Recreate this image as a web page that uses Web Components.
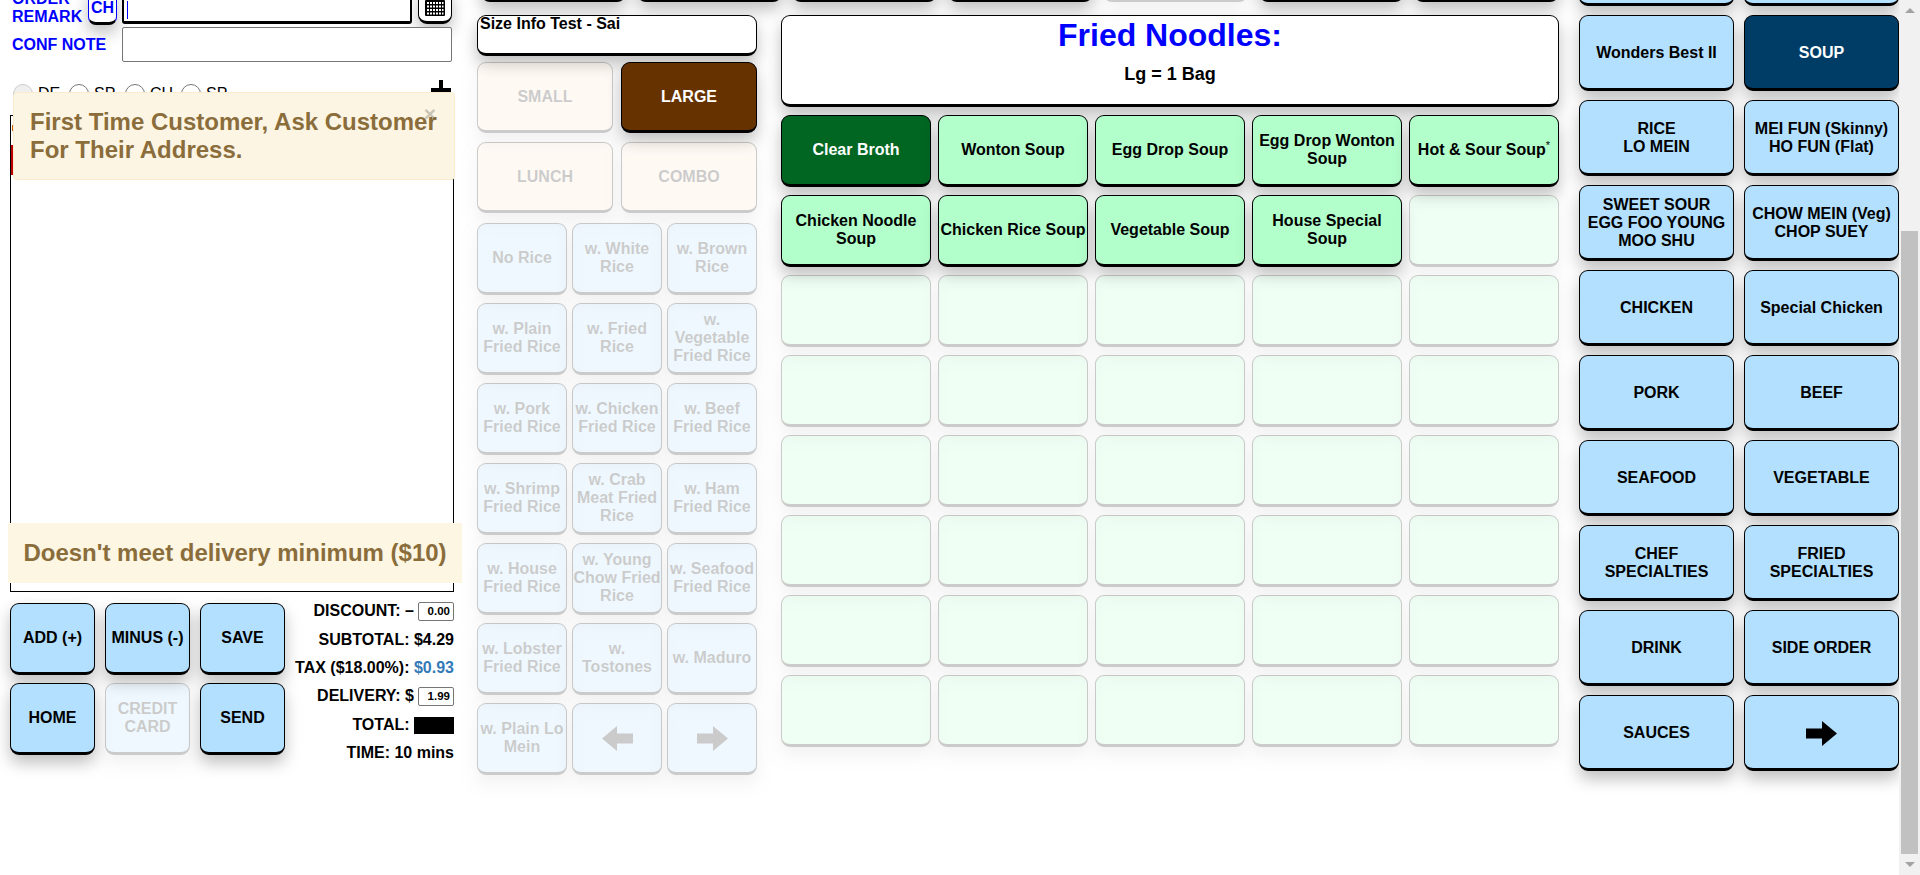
<!DOCTYPE html>
<html>
<head>
<meta charset="utf-8">
<title>POS</title>
<style>
  html, body { margin: 0; height: 100%; background: #fff; overflow: hidden; }
  body { font-family: "Liberation Sans", Arial, sans-serif; }
</style>
</head>
<body>
<pos-app></pos-app>
<script>
const ARROW_RIGHT = `<svg style="display:block;margin:auto" width="31" height="25" viewBox="0 0 31 25"><path d="M0 7.5h16V0l15 12.5L16 25v-7.5H0z" fill="currentColor"/></svg>`;
const ARROW_LEFT = `<svg style="display:block;margin:auto" width="31" height="25" viewBox="0 0 31 25"><path d="M31 7.5H15V0L0 12.5 15 25v-7.5h16z" fill="currentColor"/></svg>`;

// One menu button. Colour comes from the "tone" attribute, "off" greys it out
class PosButton extends HTMLElement {
    constructor() {
        super();
        this.attachShadow({ mode: "open" });
        this.shadowRoot.innerHTML = `
        <style>
          :host {
            display: block;
            box-sizing: border-box;
            --bg: #b3e0ff;
            --fg: #000;
            background: var(--bg);
            color: var(--fg);
            border: 1px solid #000;
            border-bottom-width: 3px;
            border-radius: 9px;
            box-shadow: 0 8px 16px rgba(0,0,0,.25);
            font: bold 16px/18px "Liberation Sans", Arial, sans-serif;
            text-align: center;
          }
          :host([tone="green"]) { --bg: #b3ffcc; }
          :host([tone="brown"]) { --bg: #663300; --fg: #fff; }
          :host([tone="dgreen"]) { --bg: #006622; --fg: #fff; }
          :host([tone="navy"]) { --bg: #003d66; --fg: #fff; }
          :host([tone="tan"]) { --bg: #ffe6cc; }
          :host([off]) { opacity: .2; }
          .in {
            box-sizing: border-box;
            height: 100%;
            padding-top: var(--nudge, 0px);
            display: flex;
            align-items: center;
            justify-content: center;
          }
        </style>
        <div class="in"><div><slot></slot></div></div>`;
    }
}

class PosOrder extends HTMLElement {
    constructor() {
        super();
        this.attachShadow({ mode: "open" });
        this.shadowRoot.innerHTML = `
        <style>
          :host { display: block; position: relative; width: 445px; padding-top: 56px; }
          .remark { display: flex; align-items: flex-end; height: 38px; }
          .lbl { color: #00f; font: bold 16px/18px "Liberation Sans", Arial, sans-serif; padding-left: 2px; }
          .remark .lbl { width: 76px; margin-bottom: -2px; }
          .ch {
            box-sizing: border-box; width: 29px; height: 39px; margin-bottom: -1px;
            border: 1px solid #00f; border-bottom: 3px solid #000; border-top-width: 0;
            border-radius: 8px; background: #fff; color: #00f;
            font: bold 16px/44px "Liberation Sans", Arial, sans-serif; text-align: center;
            box-shadow: 0 8px 16px rgba(0,0,0,.25);
          }
          .remark input {
            box-sizing: border-box; width: 290px; height: 38px; margin-left: 5px;
            border: 2px solid #000; border-bottom-width: 3px; border-radius: 3px; background: #fff; outline: 0; padding: 0;
            position: relative;
          }
          .caret { width: 1px; height: 18px; background: #00f; margin: 0 0 5px -285px; flex: none; position: relative; }
          .cal {
            box-sizing: border-box; width: 34px; height: 38px; margin-left: 290px;
            border: 1px solid #000; border-bottom: 3px solid #000; border-radius: 9px; background: #fff;
            display: flex; align-items: flex-end; justify-content: center; padding-bottom: 5px;
            box-shadow: 0 8px 16px rgba(0,0,0,.25);
          }
          .conf { display: flex; align-items: center; height: 36px; margin-top: 2px; }
          .conf .lbl { width: 110px; padding-top: 1px; }
          .conf input {
            box-sizing: border-box; width: 330px; height: 35px; border: 1px solid #767676;
            border-radius: 2px; background: #fff; padding: 0; margin: 0;
          }
          .radios { display: flex; align-items: center; height: 30px; margin-top: 17px; padding-left: 3px; position: relative; font: 16px "Liberation Sans", Arial, sans-serif; }
          .radios i { box-sizing: border-box; width: 20px; height: 20px; border: 1px solid #767676; border-radius: 50%; margin-right: 5px; }
          .radios i.off { border-color: #ccc; background: #efefef; }
          .radios span { width: 31px; }
          .plus { margin-left: auto; margin-right: 3px; margin-top: -8px; }
          .box {
            box-sizing: border-box; height: 477px; margin-top: 6px; border: 1px solid #000;
            padding-top: 9px; background: #fff;
          }
          .box b { display: block; margin-left: 1px; width: 2px; height: 6px; background: #c06000; }
          .box u { display: block; margin: 14px 0 0 0; width: 3px; height: 30px; background: #c00000; }
          .bottom { display: grid; grid-template-columns: 275px 1fr; margin-top: 11px; }
          .keys { display: grid; grid-template-columns: repeat(3, 85px); grid-auto-rows: 72px; gap: 8px 10px; }
          .sum { font: bold 16px/18px "Liberation Sans", Arial, sans-serif; text-align: right; display: grid; grid-auto-rows: 28.4px; align-items: center; margin-top: -6px; margin-left: -20px; white-space: nowrap; }
          .sum .n {
            display: inline-block; box-sizing: border-box; width: 36px; height: 19px; border: 1px solid #767676; border-radius: 2px;
            font: bold 11.5px/17px "Liberation Sans", Arial, sans-serif; text-align: right; padding-right: 3px; margin-left: 4px; vertical-align: middle;
          }
          .sum em { color: #337ab7; font-style: normal; }
          .sum .blk { display: inline-block; width: 40px; height: 17px; background: #000; vertical-align: middle; }
          .alert { position: absolute; box-sizing: border-box; font-weight: bold; color: #8a6d3b; background: #fcf5e3; }
          .a1 {
            left: 3px; right: -1px; top: 162px; height: 88px; border: 1px solid #faebcc; border-radius: 4px;
            padding: 15px 16px; font-size: 24px; line-height: 28px;
          }
          .a1 .x { position: absolute; top: 10px; right: 18px; font-size: 21px; line-height: 21px; color: #000; opacity: .2; }
          .a2 {
            left: -2px; right: -8px; top: 593px; height: 60px; background: #fcf6e3;
            font-size: 24px; line-height: 60px; text-align: center;
          }
        </style>
        <div class="remark">
          <div class="lbl">ORDER<br>REMARK</div>
          <div class="ch">CH</div>
          <input>
          <div class="caret"></div>
          <div class="cal">
            <svg width="20" height="16" viewBox="0 0 20 16">
              <rect width="20" height="16" rx="1" fill="#000"/>
              <g fill="#fff">
                <rect x="2" y="2" width="2" height="2"/><rect x="5" y="2" width="2" height="2"/><rect x="8" y="2" width="2" height="2"/><rect x="11" y="2" width="2" height="2"/><rect x="14" y="2" width="2" height="2"/><rect x="17" y="2" width="1.5" height="2"/>
                <rect x="2" y="5.5" width="2" height="2"/><rect x="5" y="5.5" width="2" height="2"/><rect x="8" y="5.5" width="2" height="2"/><rect x="11" y="5.5" width="2" height="2"/><rect x="14" y="5.5" width="2" height="2"/><rect x="17" y="5.5" width="1.5" height="2"/>
                <rect x="2" y="9" width="2" height="2"/><rect x="5" y="9" width="2" height="2"/><rect x="8" y="9" width="2" height="2"/><rect x="11" y="9" width="2" height="2"/><rect x="14" y="9" width="2" height="2"/><rect x="17" y="9" width="1.5" height="2"/>
                <rect x="2" y="12.5" width="2" height="2"/><rect x="5" y="12.5" width="2" height="2"/><rect x="8" y="12.5" width="2" height="2"/><rect x="11" y="12.5" width="2" height="2"/><rect x="14" y="12.5" width="2" height="2"/><rect x="17" y="12.5" width="1.5" height="2"/>
              </g>
            </svg>
          </div>
        </div>
        <div class="conf"><div class="lbl">CONF NOTE</div><input></div>
        <div class="radios">
          <i class="off"></i><span>DE</span><i></i><span>SP</span><i></i><span>CH</span><i></i><span>SP</span>
          <svg class="plus" width="20" height="20" viewBox="0 0 20 20"><path d="M8 0h4v8h8v4h-8v8H8v-8H0V8h8z"/></svg>
        </div>
        <div class="box"><b></b><u></u></div>
        <div class="bottom">
          <div class="keys">
            <pos-button>ADD (+)</pos-button>
            <pos-button>MINUS (-)</pos-button>
            <pos-button>SAVE</pos-button>
            <pos-button>HOME</pos-button>
            <pos-button off>CREDIT<br>CARD</pos-button>
            <pos-button>SEND</pos-button>
          </div>
          <div class="sum">
            <div>DISCOUNT: &ndash;<span class="n">0.00</span></div>
            <div>SUBTOTAL: $4.29</div>
            <div>TAX ($18.00%): <em>$0.93</em></div>
            <div>DELIVERY: $<span class="n">1.99</span></div>
            <div>TOTAL: <span class="blk"></span></div>
            <div>TIME: 10 mins</div>
          </div>
        </div>
        <div class="alert a1">First Time Customer, Ask Customer For Their Address.<span class="x">&times;</span></div>
        <div class="alert a2">Doesn't meet delivery minimum ($10)</div>`;
    }
}

class PosSizes extends HTMLElement {
    constructor() {
        super();
        this.attachShadow({ mode: "open" });
        const rice = [
            "No Rice", "w. White Rice", "w. Brown Rice",
            "w. Plain Fried Rice", "w. Fried Rice", "w. Vegetable Fried Rice",
            "w. Pork Fried Rice", "w. Chicken Fried Rice", "w. Beef Fried Rice",
            "w. Shrimp Fried Rice", "w. Crab Meat Fried Rice", "w. Ham Fried Rice",
            "w. House Fried Rice", "w. Young Chow Fried Rice", "w. Seafood Fried Rice",
            "w. Lobster Fried Rice", "w. Tostones", "w. Maduro",
            "w. Plain Lo Mein", ARROW_LEFT, ARROW_RIGHT
        ];
        this.shadowRoot.innerHTML = `
        <style>
          :host { display: block; width: 280px; }
          .info {
            box-sizing: border-box; height: 41px; background: #fff; border: 1px solid #000; border-bottom-width: 3px;
            border-radius: 9px; padding-left: 2px; font: bold 16px/16px "Liberation Sans", Arial, sans-serif;
            box-shadow: 0 8px 16px rgba(0,0,0,.25);
          }
          .two { display: grid; grid-template-columns: 136px 136px; gap: 9px 8px; grid-auto-rows: 71px; margin-top: 6px; }
          .three { display: grid; grid-template-columns: repeat(3, 90px); gap: 8px 5px; grid-auto-rows: 72px; margin-top: 10px; }
        </style>
        <div class="info">Size Info Test - Sai</div>
        <div class="two">
          <pos-button tone="tan" off>SMALL</pos-button>
          <pos-button tone="brown">LARGE</pos-button>
          <pos-button tone="tan" off>LUNCH</pos-button>
          <pos-button tone="tan" off>COMBO</pos-button>
        </div>
        <div class="three">${rice.map((r) => `<pos-button off>${r}</pos-button>`).join("")}</div>`;
    }
}

class PosItems extends HTMLElement {
    constructor() {
        super();
        this.attachShadow({ mode: "open" });
        const items = [
            "Clear Broth", "Wonton Soup", "Egg Drop Soup", "Egg Drop Wonton Soup", "Hot &amp; Sour Soup<sup>*</sup>",
            "Chicken Noodle Soup", "Chicken Rice Soup", "Vegetable Soup", "House Special Soup"
        ];
        const cells = [];
        for (let i = 0; i < 40; i++) {
            const label = items[i] || "";
            const attrs = i === 0 ? 'tone="dgreen"' : label ? 'tone="green"' : 'tone="green" off';
            cells.push(`<pos-button ${attrs}>${label}</pos-button>`);
        }
        this.shadowRoot.innerHTML = `
        <style>
          :host { display: block; width: 778px; }
          .head {
            box-sizing: border-box; height: 92px; background: #fff; border: 1px solid #000; border-bottom-width: 3px;
            border-radius: 9px; text-align: center; box-shadow: 0 8px 16px rgba(0,0,0,.25);
          }
          h1 { margin: 0; padding-top: 1px; font: bold 32px/37px "Liberation Sans", Arial, sans-serif; color: #00f; }
          p { margin: 10px 0 0; font: bold 18px/21px "Liberation Sans", Arial, sans-serif; color: #000; }
          .grid { display: grid; grid-template-columns: repeat(5, 150px); gap: 8px 7px; grid-auto-rows: 72px; margin-top: 8px; }
          pos-button sup { font-size: 11px; line-height: 0; font-weight: normal; }
        </style>
        <div class="head"><h1>Fried Noodles:</h1><p>Lg = 1 Bag</p></div>
        <div class="grid">${cells.join("")}</div>`;
    }
}

class PosCategories extends HTMLElement {
    constructor() {
        super();
        this.attachShadow({ mode: "open" });
        this.shadowRoot.innerHTML = `
        <style>
          :host { display: block; width: 320px; --nudge: 2px; }
          .grid { display: grid; grid-template-columns: 155px 155px; gap: 9px 10px; grid-auto-rows: 76px; }
        </style>
        <div class="grid">
          <pos-button></pos-button>
          <pos-button></pos-button>
          <pos-button>Wonders Best II</pos-button>
          <pos-button tone="navy">SOUP</pos-button>
          <pos-button>RICE<br>LO MEIN</pos-button>
          <pos-button>MEI FUN (Skinny)<br>HO FUN (Flat)</pos-button>
          <pos-button>SWEET SOUR<br>EGG FOO YOUNG<br>MOO SHU</pos-button>
          <pos-button>CHOW MEIN (Veg)<br>CHOP SUEY</pos-button>
          <pos-button>CHICKEN</pos-button>
          <pos-button>Special Chicken</pos-button>
          <pos-button>PORK</pos-button>
          <pos-button>BEEF</pos-button>
          <pos-button>SEAFOOD</pos-button>
          <pos-button>VEGETABLE</pos-button>
          <pos-button>CHEF<br>SPECIALTIES</pos-button>
          <pos-button>FRIED<br>SPECIALTIES</pos-button>
          <pos-button>DRINK</pos-button>
          <pos-button>SIDE ORDER</pos-button>
          <pos-button>SAUCES</pos-button>
          <pos-button>${ARROW_RIGHT}</pos-button>
        </div>`;
    }
}

// Classic scrollbar, page is scrolled to the bottom
class PosScrollbar extends HTMLElement {
    constructor() {
        super();
        this.attachShadow({ mode: "open" });
        this.shadowRoot.innerHTML = `
        <style>
          :host { display: flex; flex-direction: column; flex: none; width: 21px; height: 875px; background: #f1f1f1; box-sizing: border-box; }
          .btn { height: 21px; display: flex; align-items: center; justify-content: center; flex: none; }
          .track { flex: 1; display: flex; flex-direction: column; justify-content: flex-end; }
          .thumb { height: 623px; margin: 0 2px; background: #c1c1c1; }
          .up { width: 0; height: 0; border: 5px solid transparent; border-top: 0; border-bottom: 5px solid #a3a3a3; }
          .down { width: 0; height: 0; border: 5px solid transparent; border-bottom: 0; border-top: 5px solid #a3a3a3; }
        </style>
        <div class="btn"><div class="up"></div></div>
        <div class="track"><div class="thumb"></div></div>
        <div class="btn"><div class="down"></div></div>`;
    }
}

class PosApp extends HTMLElement {
    constructor() {
        super();
        this.attachShadow({ mode: "open" });
        this.shadowRoot.innerHTML = `
        <style>
          :host { display: flex; width: 1920px; height: 875px; overflow: hidden; background: #fff; }
          .stage { width: 1899px; height: 875px; overflow: hidden; flex: none; }
          /* the page is scrolled down, first row sits above the fold */
          .inner { display: flex; align-items: flex-start; margin-top: -70px; padding-left: 10px; }
          .midc { width: 1082px; margin-left: 23px; margin-right: 20px; flex: none; }
          .tabs { display: grid; grid-template-columns: repeat(7, 145px); column-gap: 10.5px; grid-auto-rows: 72px; padding-left: 4px; }
          .cols { display: flex; gap: 24px; margin-top: 13px; }
        </style>
        <div class="stage">
          <div class="inner">
            <pos-order></pos-order>
            <div class="midc">
              <div class="tabs">
                <pos-button></pos-button><pos-button></pos-button><pos-button></pos-button><pos-button></pos-button>
                <pos-button off></pos-button><pos-button></pos-button><pos-button></pos-button>
              </div>
              <div class="cols">
                <pos-sizes></pos-sizes>
                <pos-items></pos-items>
              </div>
            </div>
            <pos-categories></pos-categories>
          </div>
        </div>
        <pos-scrollbar></pos-scrollbar>`;
    }
}

customElements.define("pos-button", PosButton);
customElements.define("pos-order", PosOrder);
customElements.define("pos-sizes", PosSizes);
customElements.define("pos-items", PosItems);
customElements.define("pos-categories", PosCategories);
customElements.define("pos-scrollbar", PosScrollbar);
customElements.define("pos-app", PosApp);
</script>
</body>
</html>
